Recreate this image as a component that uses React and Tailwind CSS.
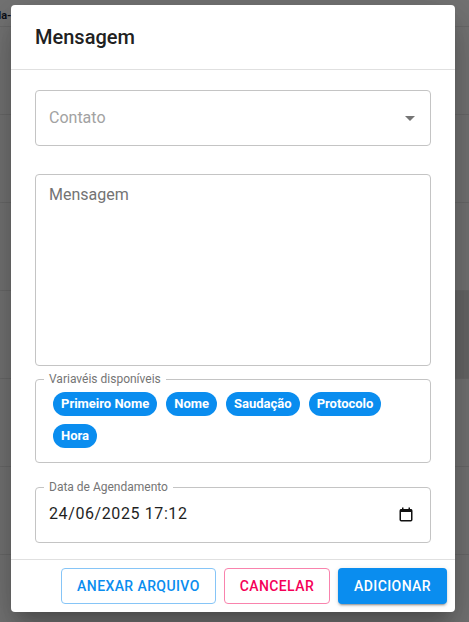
const chips = ['Primeiro Nome', 'Nome', 'Saudação', 'Protocolo', 'Hora']

function ArrowDropDown() {
  return (
    <svg className="h-6 w-6" viewBox="0 0 24 24" fill="#757575">
      <path d="M7 10l5 5 5-5z" />
    </svg>
  )
}

function CalendarIcon() {
  return (
    <svg className="h-4 w-[14px]" viewBox="0 0 14 16" fill="none">
      <rect x="1.25" y="3.75" width="11.5" height="11" rx="1" stroke="#111" strokeWidth="1.5" />
      <rect x="1" y="3.5" width="12" height="2.5" fill="#111" />
      <rect x="3" y="1.5" width="1.5" height="2.5" fill="#111" />
      <rect x="9.5" y="1.5" width="1.5" height="2.5" fill="#111" />
    </svg>
  )
}

export default function App() {
  const rows = [0, 1, 2, 3, 4, 5]

  return (
    <div className="relative h-[622px] w-[469px] overflow-hidden bg-[#747474] font-['Roboto',sans-serif]">
      {/* pagina por tras do overlay */}
      <div className="flex h-[27px] items-center border-b border-[#6a6a6a] pt-[5px]">
        <span className="-ml-[14px] text-[11px] font-bold leading-3 text-[#0c0f18]">Tela-</span>
      </div>
      {rows.map((r) => (
        <div key={r} className="flex h-[88px] justify-end border-b border-[#6a6a6a]">
          {r === 3 && <div className="w-[16px] bg-[#686868]" />}
        </div>
      ))}

      {/* Dialog */}
      <div className="absolute left-[11px] top-[5px] flex w-[444px] flex-col rounded bg-white shadow-[0_11px_15px_-7px_rgba(0,0,0,0.2),0_24px_38px_3px_rgba(0,0,0,0.14),0_9px_46px_8px_rgba(0,0,0,0.12)]">
        <h2 className="border-b border-[#e0e0e0] px-6 py-4 text-[20px] font-medium leading-8 text-[#212121]">
          Mensagem
        </h2>

        <div className="flex flex-col px-6 pb-4 pt-5">
          <div className="flex h-14 items-center justify-between rounded border border-[#c4c4c4] pl-[13px] pr-2">
            <span className="text-base text-[#a2a2a2]">Contato</span>
            <ArrowDropDown />
          </div>

          <textarea
            placeholder="Mensagem"
            className="mt-7 h-[192px] resize-none rounded border border-[#c4c4c4] px-[13px] pt-[8px] text-base leading-6 text-[#212121] outline-none placeholder:text-[#737373]"
          />

          <fieldset className="mt-[5px] rounded border border-[#c4c4c4] px-2 pb-[14px]">
            <legend className="px-[5px] text-xs leading-4 text-[#757575]">Variavéis disponíveis</legend>
            <div className="flex flex-wrap gap-x-[9px] gap-y-2 px-[9px] pt-[5px]">
              {chips.map((c) => (
                <span key={c} className="h-6 rounded-full bg-[#0a8def] px-2 text-[13px] font-bold leading-6 text-white">
                  {c}
                </span>
              ))}
            </div>
          </fieldset>

          <fieldset className="mt-4 rounded border border-[#c4c4c4] px-2 pb-4">
            <legend className="px-[5px] text-xs leading-4 text-[#757575]">Data de Agendamento</legend>
            <div className="flex items-center justify-between pl-[5px] pr-[9px] pt-[7px]">
              <span className="text-base leading-6 tracking-[0.6px] text-[#1f1f1f]">24/06/2025 17:12</span>
              <CalendarIcon />
            </div>
          </fieldset>
        </div>

        <div className="flex justify-end gap-2 border-t border-[#e0e0e0] p-2">
          <button className="h-9 rounded border border-[#86c5f7] px-[15px] text-sm font-medium uppercase tracking-[0.4px] text-[#0a8def]">
            Anexar arquivo
          </button>
          <button className="h-9 rounded border border-[#f983ad] px-[15px] text-sm font-medium uppercase tracking-[0.4px] text-[#f50057]">
            Cancelar
          </button>
          <button className="h-9 rounded bg-[#0a8def] px-4 text-sm font-medium uppercase tracking-[0.4px] text-white shadow-[0_3px_1px_-2px_rgba(0,0,0,0.2),0_2px_2px_0_rgba(0,0,0,0.14),0_1px_5px_0_rgba(0,0,0,0.12)]">
            Adicionar
          </button>
        </div>
      </div>
    </div>
  )
}
